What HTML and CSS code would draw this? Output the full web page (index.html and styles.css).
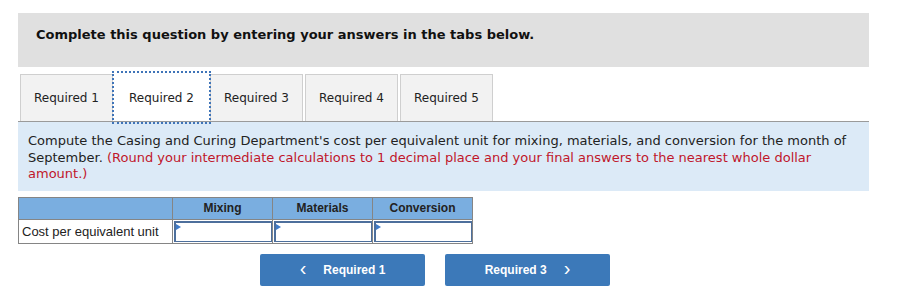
FILE: index.html
```html
<!DOCTYPE html>
<html lang="en">
<head>
  <meta charset="UTF-8">
  <title>Required 2</title>
  <link rel="stylesheet" href="styles.css">
</head>
<body>
  <div class="question">
    <div class="banner">Complete this question by entering your answers in the tabs below.</div>

    <div class="tabs">
      <div class="tab">Required 1</div>
      <div class="tab active">Required 2</div>
      <div class="tab">Required 3</div>
      <div class="tab">Required 4</div>
      <div class="tab">Required 5</div>
    </div>

    <div class="prompt">
      Compute the Casing and Curing Department's cost per equivalent unit for mixing, materials, and conversion for the month of
      September. <span class="note">(Round your intermediate calculations to 1 decimal place and your final answers to the nearest whole dollar amount.)</span>
    </div>

    <table class="answers">
      <tr>
        <th class="label-col"></th>
        <th>Mixing</th>
        <th>Materials</th>
        <th>Conversion</th>
      </tr>
      <tr>
        <td class="label-col">Cost per equivalent unit</td>
        <td class="entry"><div class="field"></div></td>
        <td class="entry"><div class="field"></div></td>
        <td class="entry"><div class="field"></div></td>
      </tr>
    </table>

    <div class="nav">
      <button class="nav-btn prev"><span class="chev">&lsaquo;</span>Required 1</button>
      <button class="nav-btn next">Required 3<span class="chev">&rsaquo;</span></button>
    </div>
  </div>
</body>
</html>
```

FILE: styles.css
```css
body {
  margin: 0;
  padding: 13px 0 0 18px;
  background-color: white;
  font-family: "DejaVu Sans", Verdana, sans-serif;
  color: #222;
}
.question {
  width: 851px;
}
.banner {
  background-color: #e0e0e0;
  font-size: 13px;
  font-weight: bold;
  line-height: 16px;
  padding: 14px 18px 24px;
  color: #111;
}
.tabs {
  display: flex;
  gap: 2px;
  margin-top: 7px;
  padding-left: 2px;
}
.tab {
  width: 91px;
  height: 46px;
  border: 1px solid #cfcfcf;
  border-bottom: none;
  background-color: #f2f2f2;
  font-size: 12px;
  display: flex;
  align-items: center;
  justify-content: center;
}
.tab.active {
  background-color: white;
  border-color: white;
  outline: 2px dotted #3f74b8;
  outline-offset: 1px;
  position: relative;
  z-index: 1;
}
.prompt {
  border-top: 1px solid #9a9a9a;
  background-color: #dceaf7;
  font-size: 13px;
  line-height: 16.5px;
  padding: 11px 10px 8px;
}
.note {
  color: #c0172b;
}
.answers {
  border-collapse: collapse;
  margin-top: 6px;
  font-family: "Liberation Sans", Arial, sans-serif;
}
.answers th,
.answers td {
  border: 1px solid #858585;
  padding: 0;
}
.answers th {
  background-color: #7aaee0;
  width: 99px;
  height: 21px;
  font-size: 12px;
  color: #222;
}
.answers th.label-col {
  width: 153px;
}
.answers td.label-col {
  font-size: 13px;
  padding-left: 3px;
  height: 22px;
}
.answers td.entry {
  padding: 1px 0 0 1px;
  height: 22px;
}
.field {
  height: 18px;
  border: 2px solid #4d6f9c;
  border-width: 2px 1px 1px 2px;
  background-color: white;
  position: relative;
}
.field::before {
  content: "";
  position: absolute;
  left: 0;
  top: 1px;
  border-left: 5px solid #3f7bc8;
  border-top: 3px solid transparent;
  border-bottom: 3px solid transparent;
}
.nav {
  display: flex;
  gap: 20px;
  margin: 10px 0 0 242px;
}
.nav-btn {
  width: 165px;
  height: 32px;
  background-color: #3c79b9;
  color: white;
  border: none;
  border-radius: 2px;
  font-family: "Liberation Sans", Arial, sans-serif;
  font-weight: bold;
  font-size: 12px;
  display: flex;
  align-items: center;
  justify-content: center;
  padding: 0;
}
.chev {
  font-size: 20px;
  font-weight: normal;
  line-height: 20px;
  margin-top: -3px;
}
.prev .chev {
  margin-right: 17px;
}
.next .chev {
  margin-left: 17px;
}
```
